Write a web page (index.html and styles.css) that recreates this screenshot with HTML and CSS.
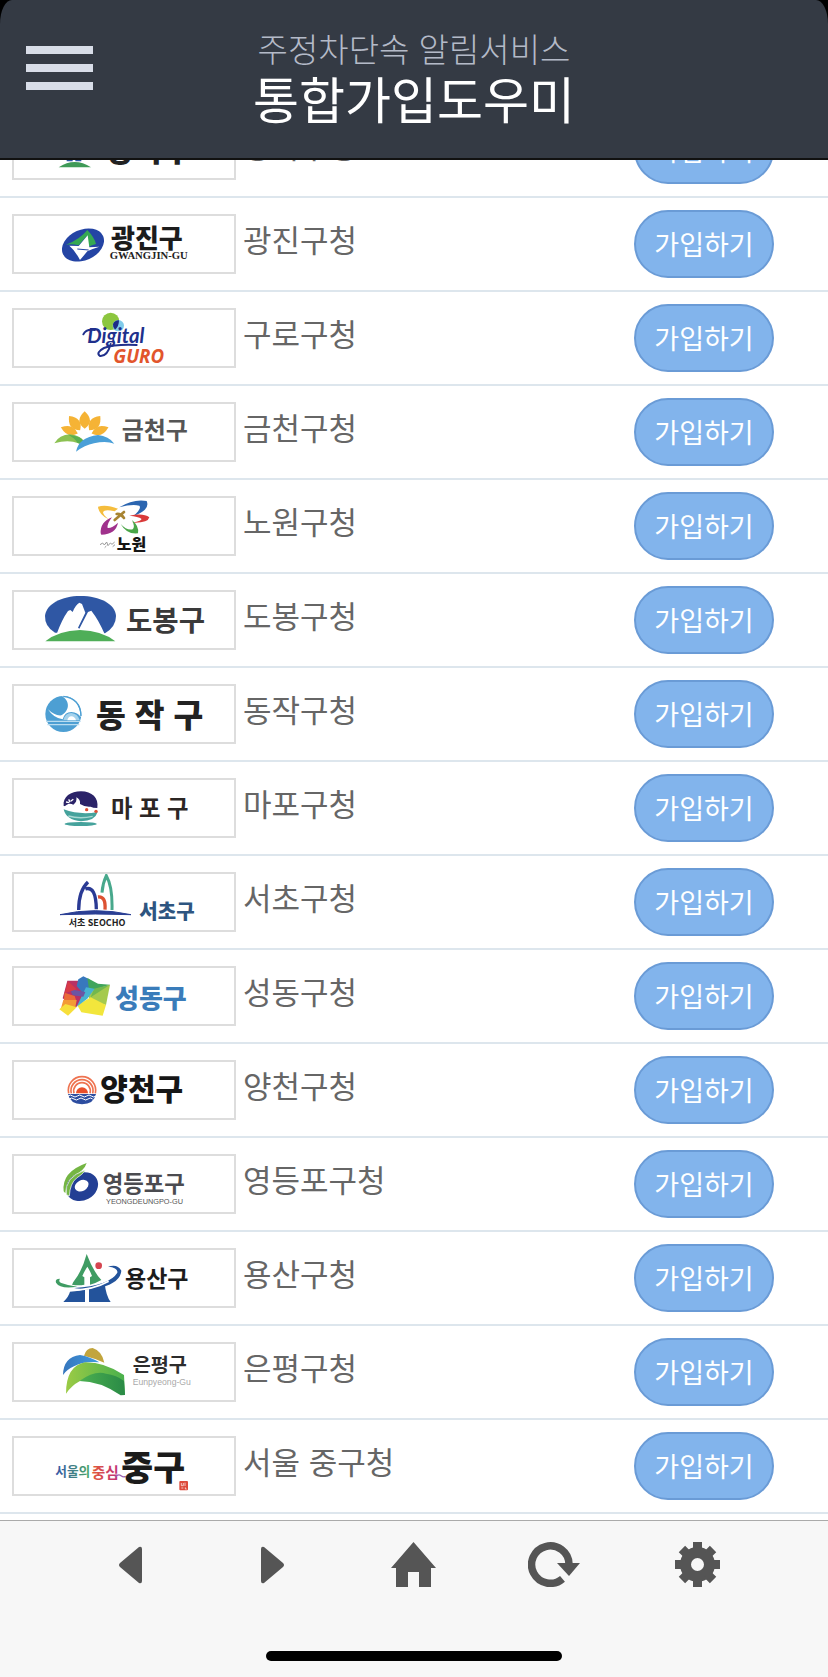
FILE: index.html
```html
<!DOCTYPE html>
<html lang="ko">
<head>
<meta charset="utf-8">
<meta name="viewport" content="width=device-width, initial-scale=1">
<title>주정차단속 알림서비스 통합가입도우미</title>
<link rel="stylesheet" href="styles.css">
</head>
<body>
<header class="header">
  <button class="menu" type="button" aria-label="메뉴"><span class="bar"></span><span class="bar"></span><span class="bar"></span></button>
  <h1 class="title"><span class="title-sub">주정차단속 알림서비스</span><span class="title-main">통합가입도우미</span></h1>
</header>

<main class="content">
<ul class="list">
  <li class="row">
    <svg class="logo" viewBox="42 -84 660 168" role="img" aria-label="강북구">
      <path d="M185 30L205 -20L225 10L245 -20L265 30Z" fill="#2d55a5"/>
      <path d="M180 38v-16h86v16z" fill="#fff"/><path d="M200 34v-10h18v10zM226 34v-10h18v10z" fill="#2d55a5"/>
      <path d="M176 52Q224 20 273 52Z" fill="#3f9a57"/>
      <text class="lt heavy" x="316" y="34" font-size="94" fill="#222">강북구</text>
    </svg>
    <span class="name">강북구청</span><button class="join" type="button">가입하기</button>
  </li>
  <li class="row">
    <svg class="logo" viewBox="42 198 660 168" role="img" aria-label="광진구">
      <ellipse cx="249" cy="285" rx="66" ry="46" transform="rotate(-24 249 285)" fill="#2444a4"/>
      <path d="M198 284Q240 268 262 240Q283 262 288 282Q275 285 266 290L260 258L236 286Q215 280 198 284Z" fill="#35a853"/>
      <path d="M208 287L236 288L263 256L268 292L298 290Q275 297 262 304L240 330Q224 300 208 287Z" fill="#fff"/>
      <path d="M232 297L266 300" stroke="#2444a4" stroke-width="3"/>
      <text class="lt heavy" x="333" y="293" font-size="78" fill="#1c1c1c">광진구</text>
      <text class="serif" x="329" y="328" font-size="32" fill="#222">GWANGJIN-GU</text>
    </svg>
    <span class="name">광진구청</span><button class="join" type="button">가입하기</button>
  </li>
  <li class="row">
    <svg class="logo" viewBox="42 480 660 168" role="img" aria-label="Digital GURO">
      <circle cx="332" cy="514" r="26" fill="#8cc63f"/><circle cx="355" cy="527" r="17" fill="#7fcbea"/>
      <path d="M339 522Q345 510 357 511Q357 530 345 539Q338 532 339 522Z" fill="#1d2b86"/>
      <path d="M250 553Q258 536 284 540M332 582Q322 620 300 618Q286 608 312 594Q345 582 410 585" fill="none" stroke="#20308c" stroke-width="6" stroke-linecap="round"/>
      <text class="script" x="262" y="579" font-size="61" fill="#20308c">Digital</text>
      <text class="guro" x="340" y="639" font-size="56" fill="#e2552c">GURO</text>
    </svg>
    <span class="name">구로구청</span><button class="join" type="button">가입하기</button>
  </li>
  <li class="row">
    <svg class="logo" viewBox="42 42 660 168" role="img" aria-label="금천구">
      <g fill="#f5b335">
        <path d="M254 116Q222 94 254 64Q286 94 254 116Z"/>
        <path d="M254 116Q224 92 254 62Q284 92 254 116Z" transform="rotate(38 254 138)"/>
        <path d="M254 116Q224 92 254 62Q284 92 254 116Z" transform="rotate(-38 254 138)"/>
        <path d="M254 116Q228 92 254 62Q280 92 254 116Z" transform="rotate(70 254 138)"/>
        <path d="M254 116Q228 92 254 62Q280 92 254 116Z" transform="rotate(-70 254 138)"/>
      </g>
      <path d="M163 160Q178 134 210 133Q245 138 253 156Q245 165 235 160Q205 148 163 160Z" fill="#8cc152"/>
      <path d="M205 134Q245 138 253 156Q245 165 232 158Q225 145 205 134Z" fill="#5aaf50"/>
      <path d="M228 185Q236 142 294 135Q326 138 343 161Q318 152 282 160Q254 166 228 185Z" fill="#4a9fd8"/>
      <text class="lt" x="365" y="147" font-size="72" fill="#555">금천구</text>
    </svg>
    <span class="name">금천구청</span><button class="join" type="button">가입하기</button>
  </li>
  <li class="row">
    <svg class="logo" viewBox="42 324 660 168" role="img" aria-label="노원">
      <path d="M294 350Q318 342 354 356L344 364Q314 356 309 366Q310 376 326 388Q296 374 294 350Z" fill="#f5bd3d"/>
      <path d="M358 352Q400 326 440 333Q452 360 400 378Q426 356 418 347Q395 342 358 352Z" fill="#2b65b0"/>
      <path d="M388 377Q430 368 448 382Q444 400 396 398Q428 392 424 386Q415 380 388 377Z" fill="#d93a3a"/>
      <path d="M302 430Q300 396 336 382Q320 402 323 414Q336 415 354 398Q348 432 304 434Z" fill="#a0328c"/>
      <path d="M362 402Q380 422 398 418Q406 410 396 390Q418 408 414 430Q380 434 362 402Z" fill="#4aa648"/>
      <path d="M344 390L372 366M350 372Q362 370 372 384" stroke="#a88432" stroke-width="8" fill="none" stroke-linecap="round"/>
      <path d="M300 464l8-5 5 6 7-9 4 11 7-8 5 4 8-7M314 473l5-5M338 470l7-6" stroke="#999" stroke-width="3" fill="none"/>
      <text class="lt heavy" x="350" y="480" font-size="48" fill="#151515">노원</text>
    </svg>
    <span class="name">노원구청</span><button class="join" type="button">가입하기</button>
  </li>
  <li class="row">
    <svg class="logo" viewBox="42 36 660 168" role="img" aria-label="도봉구">
      <path d="M165 158Q134 140 135 108C138 72 185 48 241 48C300 48 346 72 348 108Q348 140 315 160Z" fill="#2f57a4"/>
      <path d="M170 162Q186 118 204 93L211 90L218 96Q226 75 238 68L246 72L256 98L234 143L238 146L264 96L274 92Q296 120 314 162Z" fill="#fff"/>
      <path d="M136 184Q175 152 240 150Q306 152 346 184Z" fill="#4fae58"/>
      <text class="lt" x="378" y="153" font-size="86" fill="#3a3a3a">도봉구</text>
    </svg>
    <span class="name">도봉구청</span><button class="join" type="button">가입하기</button>
  </li>
  <li class="row">
    <svg class="logo" viewBox="42 318 660 168" role="img" aria-label="동작구">
      <circle cx="190" cy="402" r="54" fill="#4d9fd3"/>
      <path d="M186 349Q240 352 242 412Q234 397 214 396Q194 396 188 418Q160 414 144 388Q164 408 184 406C208 394 212 364 186 349Z" fill="#fff"/>
      <path d="M190 349Q242 356 243 408" fill="none" stroke="#4d9fd3" stroke-width="4"/>
      <path d="M190 420Q195 399 214 399Q233 401 239 420Z" fill="#a5d2ec"/><path d="M202 421Q205 409 214 409Q225 410 228 421Z" fill="#fff"/>
      <path d="M138 424H242M142 434H238" stroke="#b9dcf0" stroke-width="4"/>
      <text class="lt heavy" x="288" y="441" font-size="97" fill="#222">동 작 구</text>
    </svg>
    <span class="name">동작구청</span><button class="join" type="button">가입하기</button>
  </li>
  <li class="row">
    <svg class="logo" viewBox="42 30 660 168" role="img" aria-label="마포구">
      <path d="M191 108C188 80 212 64 243 64C276 64 297 84 292 114Q270 112 240 112Z" fill="#2b2368"/>
      <path d="M192 112Q204 96 220 104Q232 96 229 82Q242 88 240 102Q256 112 272 110Q286 116 290 126Q240 130 196 120Z" fill="#fff"/>
      <path d="M198 96l10 2M206 88l4 8M212 94l8-6" stroke="#fff" stroke-width="4"/>
      <path d="M191 118Q240 136 293 126Q285 153 243 154Q198 150 191 118Z" fill="#45a29c"/>
      <path d="M205 138Q240 148 278 139" stroke="#a8d8d2" stroke-width="4" fill="none"/>
      <circle cx="260" cy="119" r="5" fill="#e04f35"/><circle cx="288" cy="124" r="5" fill="#e04f35"/>
      <ellipse cx="242" cy="162" rx="48" ry="6" fill="#45a29c"/>
      <text class="lt" x="333" y="140" font-size="70" fill="#2c2624">마 포 구</text>
    </svg>
    <span class="name">마포구청</span><button class="join" type="button">가입하기</button>
  </li>
  <li class="row">
    <svg class="logo" viewBox="42 312 660 168" role="img" aria-label="서초구 SEOCHO">
      <g fill="none" stroke-width="10">
        <path d="M236 420Q236 362 264 336M256 357Q288 346 289 418" stroke="#2a3a94"/>
        <path d="M294 381Q318 378 315 419" stroke="#dd5232"/>
        <path d="M306 368Q308 340 319 317Q338 350 336 420" stroke="#48a88c" stroke-width="9"/>
      </g>
      <path d="M180 434Q285 410 393 434Q285 430 180 434Z" stroke="#2a3f94" stroke-width="3" fill="#2a3f94"/>
      <text class="lt" x="206" y="469" font-size="27" fill="#222">서초 SEOCHO</text>
      <text class="lt heavy" x="418" y="446" font-size="60" fill="#2e5580">서초구</text>
    </svg>
    <span class="name">서초구청</span><button class="join" type="button">가입하기</button>
  </li>
  <li class="row">
    <svg class="logo" viewBox="42 54 660 168" role="img" aria-label="성동구">
      <path d="M202 92L235 92L258 140L228 172L188 145Z" fill="#b93164"/>
      <path d="M235 88L250 79L268 88L284 140L258 140L230 108Z" fill="#3878bd"/>
      <path d="M262 84L294 101L330 104L268 125Z" fill="#3fa45b"/>
      <path d="M330 104L318 165L270 152L262 125Z" fill="#a5ca4d"/>
      <path d="M330 104L282 116L272 142Z" fill="#72b84e"/>
      <path d="M232 166L272 142L318 165L308 197L244 187Z" fill="#f2e63c"/>
      <path d="M258 112L284 116L262 146L230 170Z" fill="#47b2d1"/>
      <path d="M210 118L256 126L250 140L218 136Z" fill="#6b55a3"/>
      <path d="M194 128L224 138L228 150L190 162Z" fill="#eb6a38"/>
      <path d="M190 150L230 150L226 172L182 178Z" fill="#f39a35"/>
      <path d="M178 178L196 162L230 172L204 197Z" fill="#f7df3b"/>
      <path d="M204 94L230 118L194 130Z" fill="#d83a46"/>
      <text class="lt heavy" x="345" y="174" font-size="78" fill="#3a7cba">성동구</text>
    </svg>
    <span class="name">성동구청</span><button class="join" type="button">가입하기</button>
  </li>
  <li class="row">
    <svg class="logo" viewBox="42 336 660 168" role="img" aria-label="양천구">
      <g fill="none" stroke="#ee7350" stroke-width="5">
        <path d="M206 430A41 41 0 1 1 286 430"/><path d="M214 430A33 33 0 1 1 278 430"/><path d="M222 430A25 25 0 1 1 270 430"/>
      </g>
      <path d="M228 430A18 18 0 1 1 264 430Z" fill="#e94f2a"/>
      <path d="M204 432H288Q282 462 246 463Q210 462 204 432Z" fill="#2c4da0"/>
      <path d="M204 438q7-6 14 0t14 0t14 0t14 0t14 0t14 0M208 447q7-6 14 0t14 0t14 0t14 0t14 0" stroke="#fff" stroke-width="3" fill="none"/>
      <text class="lt heavy" x="301" y="449" font-size="90" fill="#161616">양천구</text>
    </svg>
    <span class="name">양천구청</span><button class="join" type="button">가입하기</button>
  </li>
  <li class="row">
    <svg class="logo" viewBox="42 48 660 168" role="img" aria-label="영등포구">
      <ellipse cx="246" cy="140" rx="50" ry="41" transform="rotate(-28 246 140)" fill="#233f94"/>
      <ellipse cx="245" cy="137" rx="22" ry="16" transform="rotate(-28 245 137)" fill="#fff"/>
      <path d="M191 154Q184 96 260 69Q253 92 222 106Q196 122 196 160Z" fill="#74b543"/>
      <path d="M199 164Q192 112 256 90Q248 104 230 114Q210 130 208 168Z" fill="#74b543" stroke="#fff" stroke-width="2"/>
      <text class="lt" x="308" y="156" font-size="67" fill="#4b4b50">영등포구</text>
      <text class="latin" x="318" y="192" font-size="22" fill="#555">YEONGDEUNGPO-GU</text>
    </svg>
    <span class="name">영등포구청</span><button class="join" type="button">가입하기</button>
  </li>
  <li class="row">
    <svg class="logo" viewBox="42 330 660 168" role="img" aria-label="용산구">
      <path d="M220 426Q246 394 260 342Q280 395 304 420Q285 431 270 434V412L276 408Q270 392 262 380Q254 392 247 408L253 412V434Q236 438 216 434Z" fill="#3f9c63"/>
      <path d="M190 486Q206 470 210 455Q242 453 255 448V486ZM267 486V447Q300 440 314 430Q318 468 332 486Z" fill="#23539b"/>
      <path d="M180 416Q164 416 168 428Q180 448 232 440Q208 438 184 429Q174 424 180 416Z" fill="#3f9c63"/>
      <path d="M222 444Q330 436 352 398Q354 382 324 380Q352 370 364 392Q362 426 304 442Q268 452 222 444Z" fill="#23539b"/>
      <path d="M210 450Q276 452 326 424" fill="none" stroke="#fff" stroke-width="5"/>
      <circle cx="296" cy="377" r="10" fill="#d54550"/>
      <text class="lt" x="375" y="441" font-size="69" fill="#1c1c1c">용산구</text>
    </svg>
    <span class="name">용산구청</span><button class="join" type="button">가입하기</button>
  </li>
  <li class="row">
    <svg class="logo" viewBox="42 57 660 168" role="img" aria-label="은평구 Eunpyeong-Gu">
      <defs>
        <linearGradient id="hill" x1="0" x2="1"><stop offset="0" stop-color="#9bcb45"/><stop offset="1" stop-color="#48b04c"/></linearGradient>
        <linearGradient id="slope" x1="0" x2="1"><stop offset="0" stop-color="#4bb050"/><stop offset="1" stop-color="#2a8a46"/></linearGradient>
        <linearGradient id="sky" x1="0" x2="1"><stop offset="0" stop-color="#3676bd"/><stop offset="1" stop-color="#3f9be0"/></linearGradient>
      </defs>
      <path d="M252 92Q258 70 278 69Q306 78 313 113Q285 100 252 92Z" fill="#c2a53d"/>
      <path d="M189 150Q190 96 240 90Q270 95 298 112Q250 108 222 124Q200 134 189 150Z" fill="url(#sky)"/>
      <path d="M198 206Q198 122 256 112Q315 112 372 150L375 210Q270 150 240 168Q214 182 198 206Z" fill="url(#hill)"/>
      <path d="M238 168Q285 135 318 146Q350 150 372 168L375 210L362 211Q300 168 238 168Z" fill="url(#slope)"/>
      <text class="lt" x="398" y="142" font-size="59" fill="#2c2c2c">은평구</text>
      <text class="latin" x="398" y="181" font-size="26" fill="#aaa">Eunpyeong-Gu</text>
    </svg>
    <span class="name">은평구청</span><button class="join" type="button">가입하기</button>
  </li>
  <li class="row">
    <svg class="logo" viewBox="42 339 660 168" role="img" aria-label="서울의 중심 중구">
      <defs>
        <linearGradient id="ink1" x1="0" x2="1"><stop offset="0" stop-color="#3554a8"/><stop offset="1" stop-color="#4aa865"/></linearGradient>
        <linearGradient id="ink2" x1="0" x2="1"><stop offset="0" stop-color="#e35a38"/><stop offset="1" stop-color="#c0307a"/></linearGradient>
      </defs>
      <text class="lt" x="166" y="454" font-size="38" fill="url(#ink1)">서울의</text>
      <text class="lt" x="275" y="460" font-size="44" fill="url(#ink2)">중심</text>
      <path d="M345 456q10-10 18-4t14 2" stroke="#9a60b0" stroke-width="4" fill="none"/>
      <text class="lt heavy" x="364" y="466" font-size="104" fill="#1b1b1b">중구</text>
      <rect x="538" y="468" width="26" height="28" rx="3" fill="#dd4a3a"/>
      <path d="M544 474v8h6v-8M555 473v10M544 489h6M556 487v5h4" stroke="#fff" stroke-width="2" fill="none"/>
    </svg>
    <span class="name">서울 중구청</span><button class="join" type="button">가입하기</button>
  </li>
</ul>
</main>

<footer class="footer">
  <nav class="tools">
    <button class="tool" type="button" aria-label="뒤로"><svg width="24" height="38" viewBox="0 0 24 38"><path d="M1 17L20 1Q23 0 23 3V35Q23 38 20 37L1 21Q-1 19 1 17Z"/></svg></button>
    <button class="tool" type="button" aria-label="앞으로"><svg width="24" height="38" viewBox="0 0 24 38"><path d="M23 17L4 1Q1 0 1 3V35Q1 38 4 37L23 21Q25 19 23 17Z"/></svg></button>
    <button class="tool" type="button" aria-label="홈"><svg width="45" height="45" viewBox="0 0 45 45"><path d="M22.500 0L45 26H40V45H28V30H17V45H5V26H0Z"/></svg></button>
    <button class="tool" type="button" aria-label="새로고침"><svg width="56" height="45" viewBox="0 0 56 45"><path d="M41 22A18.700 18.700 0 1 0 34.500 36.800" fill="none" stroke="#555" stroke-width="7.500"/><path d="M29 21H52L41 34Z"/></svg></button>
    <button class="tool" type="button" aria-label="설정"><svg width="45" height="45" viewBox="-22.5 -22.5 45 45"><circle r="12" fill="none" stroke="#555" stroke-width="11"/><path d="M-4.500 -22.500h9v8h-9zM-4.500 14.500h9v8h-9zM-22.500 -4.500h8v9h-8zM14.500 -4.500h8v9h-8z"/><path transform="rotate(45)" d="M-4.500 -22h9v8h-9zM-4.500 14h9v8h-9zM-22 -4.500h8v9h-8zM14 -4.500h8v9h-8z"/></svg></button>
  </nav>
  <div class="home-bar"></div>
</footer>
</body>
</html>
```

FILE: styles.css
```css
* {
  box-sizing: border-box;
}

body {
  margin: 0;
  height: 100vh;
  display: flex;
  flex-direction: column;
  background: #000;
  font-family: "Noto Sans CJK KR", "Noto Sans", sans-serif;
}

button {
  padding: 0;
  border: 0;
  background: none;
  font: inherit;
  cursor: pointer;
}

.header {
  flex: none;
  display: grid;
  grid-template-columns: 1fr auto 1fr;
  align-items: start;
  height: 160px;
  padding: 28px 26px 0;
  background: #343a44;
  border-bottom: 2px solid #111;
  border-radius: 12px 12px 0 0 / 24px 24px 0 0;
}

.menu {
  display: flex;
  flex-direction: column;
  gap: 10px;
  width: 67px;
  margin-top: 18px;
}

.bar {
  height: 8px;
  background: #d8dde8;
}

.title {
  margin: 0;
  font-weight: 300;
  text-align: center;
}

.title-sub,
.title-main {
  display: block;
}

.title-sub {
  font-size: 33px;
  line-height: 40px;
  color: #b4bac8;
}

.title-main {
  font-size: 50px;
  line-height: 58px;
  font-weight: 400;
  color: #fff;
}

/* The list is scrolled to its end, so overflow falls off the top. */
.content {
  flex: 1;
  min-height: 0;
  display: flex;
  flex-direction: column;
  justify-content: flex-end;
  overflow: hidden;
  padding-bottom: 6px;
  background: #fff;
}

.list {
  flex: none;
  margin: 0;
  padding: 0;
  list-style: none;
}

.row {
  display: flex;
  align-items: center;
  height: 94px;
  padding: 0 54px 0 12px;
  border-bottom: 2px solid #dde6ed;
}

.logo {
  flex: none;
  width: 224px;
  height: 60px;
  border: 2px solid #ddd;
}

.lt {
  font-family: "Noto Sans CJK KR", sans-serif;
  font-weight: 700;
}

.heavy {
  font-weight: 900;
}

.serif {
  font-family: "Liberation Serif", serif;
  font-weight: 700;
}

.script {
  font-family: Lato, sans-serif;
  font-style: italic;
  font-weight: 700;
}

.guro {
  font-family: "Open Sans", sans-serif;
  font-style: italic;
  font-weight: 700;
}

.latin {
  font-family: "Liberation Sans", sans-serif;
}

.name {
  flex: 1;
  padding: 0 7px 10px;
  font-size: 31px;
  line-height: 40px;
  color: #666;
}

.join {
  flex: none;
  width: 140px;
  height: 68px;
  border: 2px solid #6a9bd6;
  border-radius: 34px;
  background: #82b4ec;
  font-size: 27px;
  line-height: 40px;
  color: #fff;
}

.footer {
  flex: none;
  padding: 21px 60px 16px;
  border-top: 1px solid #aaa;
  background: #f7f7f7;
}

.tools {
  display: grid;
  grid-template-columns: repeat(5, 1fr);
}

.tool {
  display: flex;
  align-items: center;
  justify-content: center;
  height: 45px;
  fill: #555;
}

.home-bar {
  width: 296px;
  height: 10px;
  margin: 64px auto 0;
  border-radius: 5px;
  background: #000;
}
```
